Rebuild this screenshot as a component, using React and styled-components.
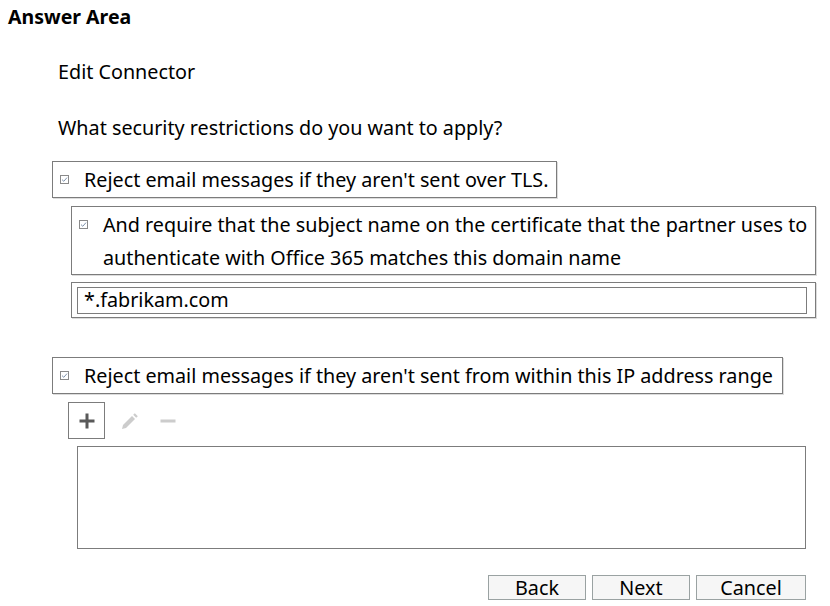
import React from "react";
import styled, { createGlobalStyle } from "styled-components";

const GlobalStyle = createGlobalStyle`
  body {
    margin: 0;
    background: #ffffff;
    font-family: "Noto Sans", "Open Sans", sans-serif;
    color: #000;
  }
`;

const Page = styled.div`
  width: 830px;
  height: 606px;
  padding: 6px 8px 0 8px;
  box-sizing: border-box;
  display: flex;
  flex-direction: column;
`;

const Title = styled.div`
  font-weight: 700;
  font-size: 19.5px;
  line-height: 22px;
`;

const Content = styled.div`
  display: flex;
  flex-direction: column;
  padding-left: 44px;
`;

const Heading = styled.div`
  font-size: 19.75px;
  line-height: 26px;
  padding-left: 6px;
  margin-top: ${(p) => p.$top}px;
`;

const OptionBox = styled.div`
  display: flex;
  align-items: ${(p) => (p.$multi ? "flex-start" : "center")};
  align-self: flex-start;
  box-sizing: border-box;
  border: 1px solid #7c7c7c;
  box-shadow: 1px 1px 0 #dcdcdc;
  background: #fff;
  white-space: nowrap;
  margin-top: ${(p) => p.$top}px;
  margin-left: ${(p) => p.$indent || 0}px;
  width: ${(p) => p.$width}px;
  height: ${(p) => p.$height}px;
  padding: ${(p) => (p.$multi ? "1px 6px 0 7px" : "0 6px 0 7px")};
  font-size: 19.75px;
  line-height: ${(p) => (p.$multi ? "33px" : "26px")};
`;

const CheckWrap = styled.span`
  display: inline-flex;
  flex: none;
  width: 9px;
  height: 9px;
  margin-right: 15px;
  margin-top: ${(p) => (p.$multi ? "12px" : "0")};
`;

const InputWrap = styled.div`
  box-sizing: border-box;
  border: 1px solid #7c7c7c;
  box-shadow: 1px 1px 0 #dcdcdc;
  margin-top: 7px;
  margin-left: 19px;
  width: 745px;
  height: 36px;
  padding: 4px 8px 0 5px;
`;

const TextInput = styled.div`
  box-sizing: border-box;
  border: 1px solid #7c7c7c;
  height: 27px;
  width: 100%;
  padding-left: 6px;
  font-size: 19.75px;
  line-height: 24px;
`;

const Toolbar = styled.div`
  display: flex;
  align-items: center;
  gap: 4px;
  margin-top: 8px;
  margin-left: 16px;
`;

const ToolButton = styled.div`
  box-sizing: border-box;
  width: ${(p) => p.$width}px;
  height: 37px;
  display: flex;
  align-items: center;
  justify-content: center;
  border: 1px solid ${(p) => (p.$active ? "#7c7c7c" : "transparent")};
`;

const ListBox = styled.div`
  box-sizing: border-box;
  border: 1px solid #7c7c7c;
  width: 729px;
  height: 103px;
  margin-top: 7px;
  margin-left: 25px;
`;

const Footer = styled.div`
  display: flex;
  justify-content: flex-end;
  gap: 6px;
  margin-top: 26px;
  padding-right: 16px;
`;

const NavButton = styled.button`
  box-sizing: border-box;
  width: ${(p) => p.$width}px;
  height: 25px;
  border: 1px solid #9aa2a2;
  background: #f6f6f6;
  font-family: "Noto Sans", "Open Sans", sans-serif;
  font-size: 19.75px;
  line-height: 22px;
  padding: 0;
  color: #000;
`;

const Check = () => (
  <svg width="9" height="9" viewBox="0 0 9 9">
    <rect x="0.5" y="0.5" width="8" height="8" fill="#fff" stroke="#8a8a8a" />
    <path d="M2 4.6 L3.8 6.3 L7 2.6" fill="none" stroke="#7f93ad" strokeWidth="1" />
  </svg>
);

const Plus = () => (
  <svg width="16" height="16" viewBox="0 0 16 16">
    <rect x="6.5" y="0.5" width="3" height="15" fill="#595959" />
    <rect x="0.5" y="6.5" width="15" height="3" fill="#595959" />
  </svg>
);

const Pencil = () => (
  <svg width="17" height="18" viewBox="0 0 17 18">
    <path d="M1 17 L2 13 L11 4 L14 7 L5 16 Z" fill="#cccccc" />
    <path d="M12.2 2.8 L13.8 1.2 L16.8 4.2 L15.2 5.8 Z" fill="#cccccc" />
  </svg>
);

const Minus = () => (
  <svg width="16" height="16" viewBox="0 0 16 16">
    <rect x="0.5" y="6.5" width="15" height="3" fill="#cccccc" />
  </svg>
);

export default function App() {
  return (
    <Page>
      <GlobalStyle />
      <Title>Answer Area</Title>
      <Content>
        <Heading $top={31}>Edit Connector</Heading>
        <Heading $top={30}>What security restrictions do you want to apply?</Heading>

        <OptionBox $top={20} $width={505} $height={37}>
          <CheckWrap>
            <Check />
          </CheckWrap>
          Reject email messages if they aren't sent over TLS.
        </OptionBox>

        <OptionBox $top={8} $indent={19} $width={745} $height={69} $multi>
          <CheckWrap $multi>
            <Check />
          </CheckWrap>
          <span>
            And require that the subject name on the certificate that the partner uses to
            <br />
            authenticate with Office 365 matches this domain name
          </span>
        </OptionBox>

        <InputWrap>
          <TextInput>*.fabrikam.com</TextInput>
        </InputWrap>

        <OptionBox $top={39} $width={731} $height={37}>
          <CheckWrap>
            <Check />
          </CheckWrap>
          Reject email messages if they aren't sent from within this IP address range
        </OptionBox>

        <Toolbar>
          <ToolButton $active $width={37}>
            <Plus />
          </ToolButton>
          <ToolButton $width={40}>
            <Pencil />
          </ToolButton>
          <ToolButton $width={30}>
            <Minus />
          </ToolButton>
        </Toolbar>

        <ListBox />
      </Content>
      <Footer>
        <NavButton $width={98}>Back</NavButton>
        <NavButton $width={98}>Next</NavButton>
        <NavButton $width={110}>Cancel</NavButton>
      </Footer>
    </Page>
  );
}
